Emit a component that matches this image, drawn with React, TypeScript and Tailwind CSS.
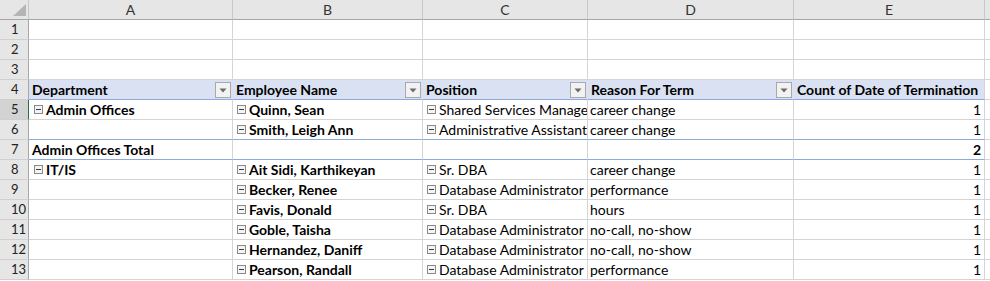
import React from "react";

const FONT = { fontFamily: "Lato, 'Liberation Sans', sans-serif" };

function Minus() {
  return (
    <svg width="9" height="9" viewBox="0 0 9 9" className="shrink-0 mr-[3px] mb-[5px]">
      <rect x="0.5" y="0.5" width="8" height="8" fill="#f4f4f4" stroke="#8a8a8a" />
      <rect x="2" y="4" width="5" height="1" fill="#3c3c3c" />
    </svg>
  );
}

function Drop() {
  return (
    <div className="absolute right-[1px] top-[2px] w-[16px] h-[16px] border border-[#a9a9a9] bg-[#f2f2f2] flex items-center justify-center">
      <svg width="8" height="5" viewBox="0 0 8 5">
        <path d="M0.5 0.5 L7.5 0.5 L4 4.5 Z" fill="#6b6b6b" />
      </svg>
    </div>
  );
}

type Row = {
  n: number;
  a?: string;
  aMinus?: boolean;
  b?: string;
  c?: string;
  d?: string;
  e?: string;
  total?: boolean;
};

const rows: Row[] = [
  { n: 5, a: "Admin Offices", aMinus: true, b: "Quinn, Sean", c: "Shared Services Manager", d: "career change", e: "1" },
  { n: 6, b: "Smith, Leigh Ann", c: "Administrative Assistant", d: "career change", e: "1" },
  { n: 7, a: "Admin Offices Total", total: true, e: "2" },
  { n: 8, a: "IT/IS", aMinus: true, b: "Ait Sidi, Karthikeyan", c: "Sr. DBA", d: "career change", e: "1" },
  { n: 9, b: "Becker, Renee", c: "Database Administrator", d: "performance", e: "1" },
  { n: 10, b: "Favis, Donald", c: "Sr. DBA", d: "hours", e: "1" },
  { n: 11, b: "Goble, Taisha", c: "Database Administrator", d: "no-call, no-show", e: "1" },
  { n: 12, b: "Hernandez, Daniff", c: "Database Administrator", d: "no-call, no-show", e: "1" },
  { n: 13, b: "Pearson, Randall", c: "Database Administrator", d: "performance", e: "1" },
];

const COLS = "grid-cols-[29px_204px_190px_165px_206px_191px_5px]";

function RowHead({ n, active }: { n: number; active?: boolean }) {
  return (
    <div
      className={
        "h-[20px] border-b border-[#d0d0d0] border-r flex items-end leading-[19px] text-[13px] text-[#222] pl-[11px] " +
        (active ? "bg-[#d3d3d3] border-r-[#217346]" : "bg-[#e6e6e6] border-r-[#a6a6a6]")
      }
    >
      {n}
    </div>
  );
}

function Cell({
  children,
  bold,
  right,
  bottomBlue,
  minus,
  pl = "pl-[4px]",
}: {
  children?: React.ReactNode;
  bold?: boolean;
  right?: boolean;
  bottomBlue?: boolean;
  minus?: boolean;
  pl?: string;
}) {
  return (
    <div
      className={
        "h-[20px] border-r border-b border-r-[#d4d4d4] flex items-end overflow-hidden whitespace-nowrap leading-[19px] text-[14px] text-black " +
        (bottomBlue ? "border-b-[#8ea9db] " : "border-b-[#d4d4d4] ") +
        (bold ? "font-bold " : "") +
        (right ? "justify-end pr-[3px] " : pl + " ")
      }
    >
      {minus && <Minus />}
      {children}
    </div>
  );
}

export default function App() {
  return (
    <div className="w-[990px] h-[281px] overflow-hidden bg-white" style={FONT}>
      <div className={"grid " + COLS}>
        {/* column header row */}
        <div className="relative h-[20px] bg-[#e6e6e6] border-r border-b border-r-[#c8c8c8] border-b-[#a6a6a6]">
          <svg width="14" height="13" viewBox="0 0 14 13" className="absolute left-[13px] top-[4px]">
            <path d="M13 0 L13 12 L0 12 Z" fill="#b5b5b5" />
          </svg>
        </div>
        {["A", "B", "C", "D", "E"].map((l) => (
          <div
            key={l}
            className="h-[20px] bg-[#e6e6e6] border-r border-b border-r-[#c8c8c8] border-b-[#a6a6a6] flex items-end justify-center leading-[19px] text-[14px] text-[#333]"
          >
            {l}
          </div>
        ))}
        <div className="h-[20px] bg-[#e6e6e6] border-b border-b-[#a6a6a6]" />

        {/* empty rows 1-3 */}
        {[1, 2, 3].map((n) => (
          <React.Fragment key={n}>
            <RowHead n={n} />
            <Cell />
            <Cell />
            <Cell />
            <Cell />
            <Cell />
            <div className="h-[20px] border-b border-[#d4d4d4]" />
          </React.Fragment>
        ))}

        {/* row 4 pivot header */}
        <RowHead n={4} />
        {[
          { t: "Department", drop: true },
          { t: "Employee Name", drop: true },
          { t: "Position", drop: true },
          { t: "Reason For Term", drop: true },
          { t: "Count of Date of Termination", drop: false },
        ].map((h, i) => (
          <div
            key={h.t}
            className={
              "relative h-[20px] bg-[#d9e1f2] border-b border-b-[#8ea9db] border-r flex items-end pl-[3px] overflow-hidden whitespace-nowrap leading-[19px] text-[14px] font-bold text-black " +
              (i === 4 ? "border-r-[#d4d4d4]" : "border-r-[#d9e1f2]")
            }
          >
            {h.t}
            {h.drop && <Drop />}
          </div>
        ))}
        <div className="h-[20px] border-b border-[#d4d4d4]" />

        {rows.map((r) => {
          const blue = r.n === 6 || r.n === 7;
          return (
            <React.Fragment key={r.n}>
              <RowHead n={r.n} active={r.n === 5} />
              <Cell bold bottomBlue={blue} minus={r.aMinus} pl={r.aMinus ? "pl-[5px]" : "pl-[3px]"}>
                {r.a}
              </Cell>
              <Cell bold bottomBlue={blue} minus={!!r.b}>
                {r.b}
              </Cell>
              <Cell bottomBlue={blue} minus={!!r.c}>
                {r.c}
              </Cell>
              <Cell bottomBlue={blue} pl="pl-[2px]">
                {r.d}
              </Cell>
              <Cell bottomBlue={blue} right bold={r.total}>
                {r.e}
              </Cell>
              <div className="h-[20px] border-b border-[#d4d4d4]" />
            </React.Fragment>
          );
        })}
      </div>
    </div>
  );
}
